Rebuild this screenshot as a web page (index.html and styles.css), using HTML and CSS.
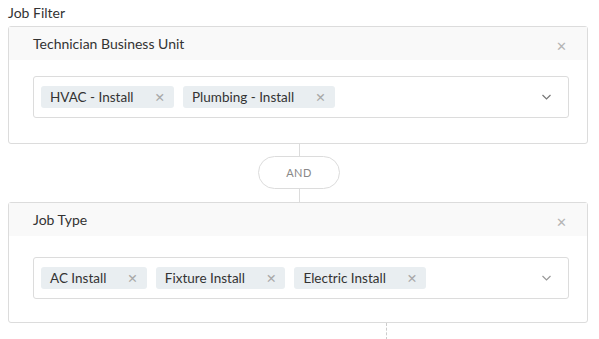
FILE: index.html
```html
<!DOCTYPE html>
<html lang="en">
<head>
  <meta charset="UTF-8" />
  <title>Job Filter</title>
  <link rel="stylesheet" href="styles.css">
</head>
<body>
  <div class="page">
    <div class="page-title">Job Filter</div>

    <div class="filter-card">
      <div class="filter-head">
        <span class="filter-name">Technician Business Unit</span>
        <span class="close">&#x2715;</span>
      </div>
      <div class="filter-body">
        <div class="select">
          <span class="tag">HVAC - Install <span class="tag-x">&#x2715;</span></span>
          <span class="tag">Plumbing - Install <span class="tag-x">&#x2715;</span></span>
          <svg class="chevron" width="9" height="6" viewBox="0 0 9 6"><path d="M0.5 1l4 4 4-4" fill="none" stroke="#777" stroke-width="1.2"/></svg>
        </div>
      </div>
    </div>

    <div class="connector">
      <div class="line"></div>
      <div class="pill">AND</div>
      <div class="line"></div>
    </div>

    <div class="filter-card second">
      <div class="filter-head">
        <span class="filter-name">Job Type</span>
        <span class="close">&#x2715;</span>
      </div>
      <div class="filter-body">
        <div class="select">
          <span class="tag">AC Install <span class="tag-x">&#x2715;</span></span>
          <span class="tag">Fixture Install <span class="tag-x">&#x2715;</span></span>
          <span class="tag">Electric Install <span class="tag-x">&#x2715;</span></span>
          <svg class="chevron" width="9" height="6" viewBox="0 0 9 6"><path d="M0.5 1l4 4 4-4" fill="none" stroke="#999" stroke-width="1.2"/></svg>
        </div>
      </div>
    </div>

    <div class="dash"></div>
  </div>
</body>
</html>
```

FILE: styles.css
```css
* {
  box-sizing: border-box;
}
body {
  margin: 0;
  font-family: Lato, 'Open Sans', sans-serif;
  color: #333;
  background: #fff;
}
.page {
  padding: 4px 0 0 8px;
  width: 588px;
}
.page-title {
  font-size: 14px;
  line-height: 18px;
  height: 22px;
  color: #333;
}
.filter-card {
  border: 1px solid #dcdcdc;
  border-radius: 3px;
  width: 580px;
  background: #fff;
}
.filter-head {
  display: flex;
  justify-content: space-between;
  align-items: center;
  height: 33px;
  background: #f9f9f9;
  padding: 0 20px 0 24px;
}
.filter-name {
  font-size: 14px;
  color: #333;
  margin-top: 0;
}
.close {
  font-family: 'DejaVu Sans', sans-serif;
  font-size: 13px;
  color: #b5b5b5;
  margin-top: 6px;
}
.filter-body {
  padding: 16px 18px 25px 24px;
}
.second .filter-body {
  padding-top: 21px;
  padding-bottom: 23px;
}
.select {
  display: flex;
  align-items: center;
  gap: 9px;
  height: 42px;
  border: 1px solid #dcdcdc;
  border-radius: 3px;
  padding: 0 17px 0 7px;
}
.tag {
  display: flex;
  align-items: center;
  height: 22px;
  padding: 0 9px 0 9px;
  background: #e9eef1;
  border-radius: 3px;
  font-size: 13.5px;
  color: #333;
  gap: 21px;
}
.tag-x {
  font-family: 'DejaVu Sans', sans-serif;
  font-size: 12.5px;
  color: #a8a8a8;
}
.chevron {
  margin-left: auto;
}
.connector {
  display: flex;
  flex-direction: column;
  align-items: center;
  width: 580px;
  padding-left: 2px;
}
.line {
  width: 1px;
  height: 12px;
  background: #dcdcdc;
}
.line:last-child {
  height: 13px;
}
.pill {
  width: 82px;
  height: 33px;
  border: 1px solid #dcdcdc;
  border-radius: 17px;
  display: flex;
  align-items: center;
  justify-content: center;
  font-size: 11px;
  color: #888;
  letter-spacing: 0.5px;
}
.dash {
  margin-left: 378px;
  width: 0;
  height: 17px;
  border-left: 1px dashed #ccc;
}
```
